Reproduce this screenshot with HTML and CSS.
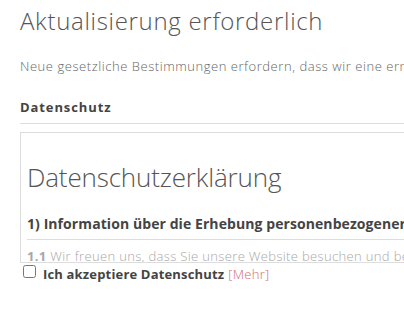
FILE: index.html
```html
<!DOCTYPE html>
<html lang="de">
<head>
    <meta charset="UTF-8">
    <meta name="viewport" content="width=device-width, initial-scale=1.0">
    <title>Aktualisierung erforderlich</title>
    <link rel="stylesheet" href="styles.css">
</head>

<body>
    <main class="update-modal">
        <h1 class="modal-title">Aktualisierung erforderlich</h1>
        <p class="modal-intro">Neue gesetzliche Bestimmungen erfordern, dass wir eine erneute Zustimmung einholen.</p>

        <section class="privacy-section">
            <h2 class="section-title">Datenschutz</h2>

            <div class="privacy-box">
                <h3 class="privacy-heading">Datenschutzerklärung</h3>
                <h4 class="privacy-subheading">1) Information über die Erhebung personenbezogener Daten und Kontaktdaten</h4>
                <p class="privacy-text"><strong>1.1</strong> Wir freuen uns, dass Sie unsere Website besuchen und bedanken uns für Ihr Interesse.</p>
            </div>

            <label class="accept-row">
                <input type="checkbox" class="accept-check">
                <span class="accept-label">Ich akzeptiere Datenschutz</span>
                <a href="#" class="accept-more">[Mehr]</a>
            </label>
        </section>
    </main>
</body>
</html>
```

FILE: styles.css
```css
:root {
    --color-text: #5a5a5a;
    --color-strong: #444444;
    --color-muted: #a8a8a8;
    --color-line: #dddddd;
    --color-link: #d26a6a;
}

* {
    margin: 0;
    padding: 0;
    box-sizing: border-box;
}

body {
    overflow: hidden;
    background-color: #ffffff;
    font-family: "Open Sans", "Lato", sans-serif;
    color: var(--color-text);
}

.update-modal {
    width: 620px;
    padding: 5px 20px 0;
}

.modal-title {
    font-size: 24px;
    font-weight: 300;
    line-height: 32px;
    letter-spacing: 0.7px;
    color: #555555;
}

.modal-intro {
    margin-top: 19px;
    font-size: 13px;
    font-weight: 300;
    line-height: 20px;
    letter-spacing: 0.55px;
    white-space: nowrap;
    color: #666666;
}

.privacy-section {
    margin-top: 21px;
}

.section-title {
    font-size: 13px;
    font-weight: 700;
    line-height: 20px;
    letter-spacing: 0.9px;
    color: var(--color-strong);
    padding-bottom: 6px;
    border-bottom: 1px solid var(--color-line);
}

.privacy-box {
    margin-top: 8px;
    height: 131px;
    overflow: hidden;
    padding: 0 6px;
    border: 1px solid var(--color-line);
    border-right: none;
}

.privacy-heading {
    margin-top: 27px;
    font-size: 26px;
    font-weight: 300;
    line-height: 34px;
    letter-spacing: -0.15px;
    color: #555555;
}

.privacy-subheading {
    margin-top: 20px;
    padding-bottom: 5px;
    font-size: 14px;
    font-weight: 700;
    line-height: 20px;
    letter-spacing: 0.08px;
    white-space: nowrap;
    color: var(--color-strong);
    border-bottom: 1px solid var(--color-line);
}

.privacy-text {
    margin-top: 6px;
    font-size: 13px;
    font-weight: 300;
    line-height: 20px;
    letter-spacing: 0.35px;
    white-space: nowrap;
    color: var(--color-muted);
}

.privacy-text strong {
    font-weight: 700;
}

.accept-row {
    display: flex;
    align-items: flex-start;
    gap: 7px;
    margin-top: 2px;
    padding-left: 3px;
    font-size: 13px;
    line-height: 18px;
}

.accept-check {
    width: 13px;
    height: 13px;
    margin: 0;
}

.accept-label {
    font-weight: 700;
    letter-spacing: 0.17px;
    color: var(--color-strong);
}

.accept-more {
    margin-left: -3px;
    font-weight: 300;
    letter-spacing: 0.3px;
    color: var(--color-link);
    text-decoration: none;
}
```
